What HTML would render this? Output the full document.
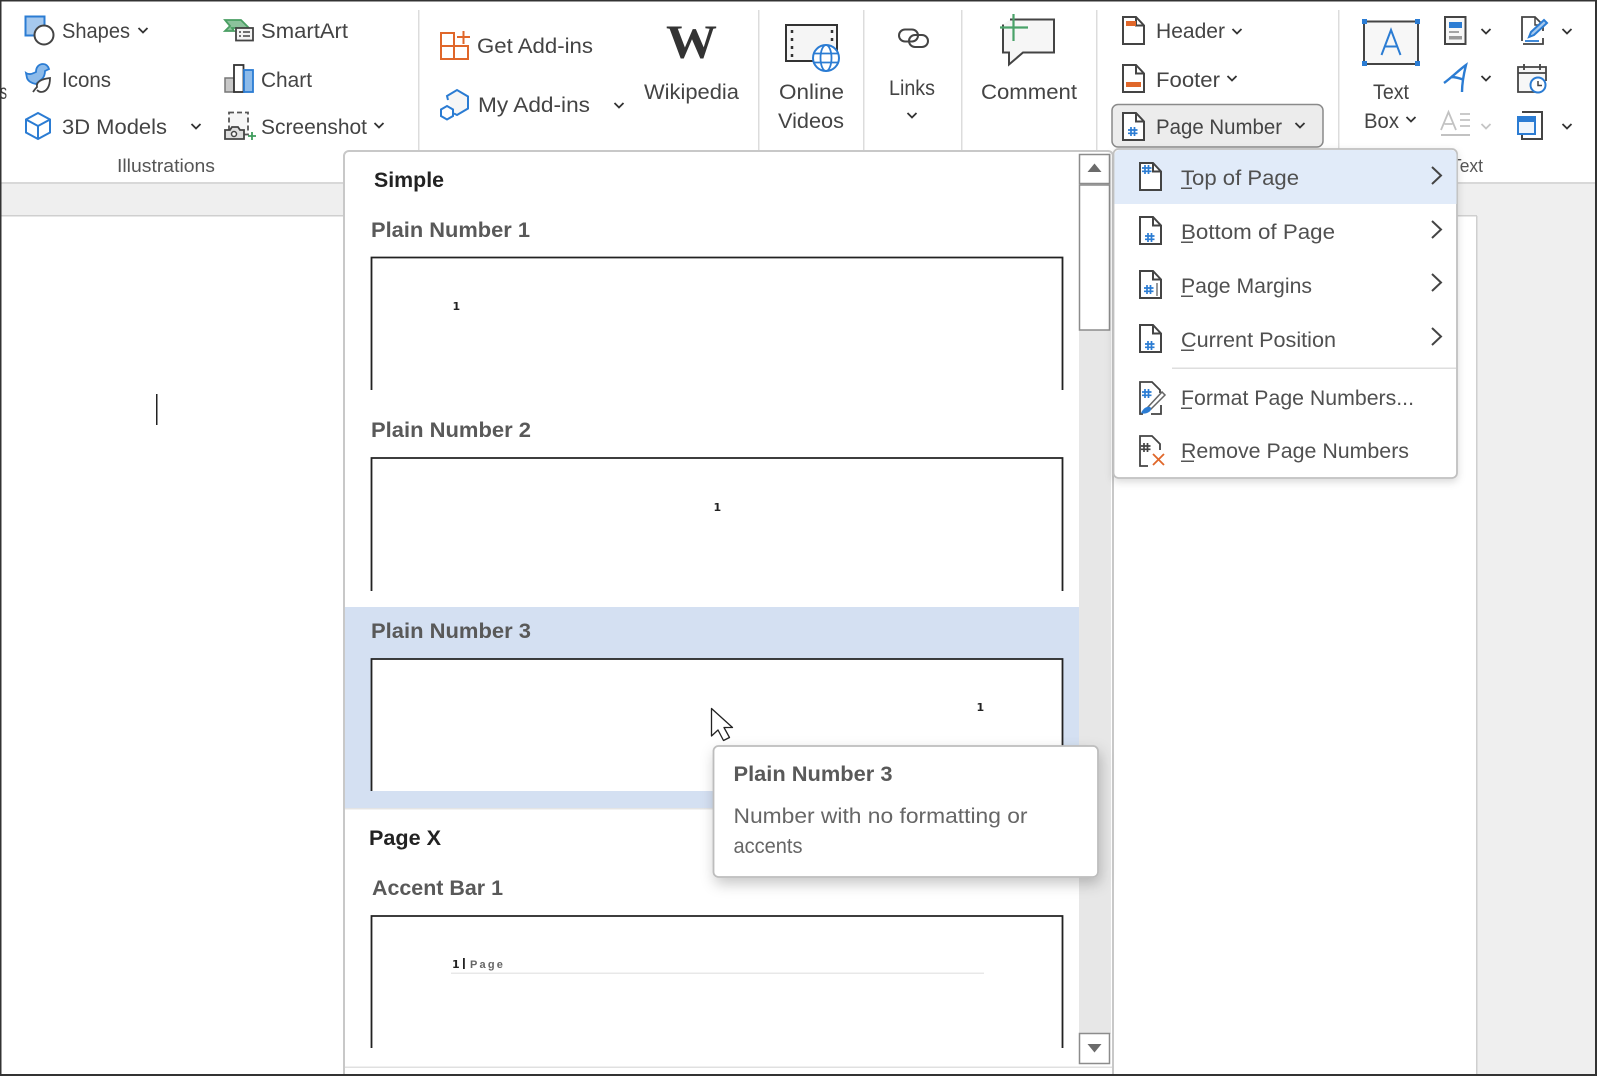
<!DOCTYPE html>
<html><head><meta charset="utf-8"><style>
html,body{margin:0;padding:0;background:#fff;width:1597px;height:1076px;overflow:hidden}
svg{display:block;position:absolute;left:0;top:0}
text{font-family:"Liberation Sans",sans-serif;font-size:21px;fill:#444}
.b{font-weight:bold;fill:#595959}
.h{font-weight:bold;fill:#222}
.g{font-size:18px;fill:#555}
.m{fill:#505050}
.t{fill:#666}
.n{font-size:11px;font-weight:bold;fill:#222;font-family:"DejaVu Sans",sans-serif}
</style></head><body>
<svg width="1597" height="1076" viewBox="0 0 1597 1076" xmlns="http://www.w3.org/2000/svg">
<defs>
<g id="c"><polyline points="-4.5,-2 0,2.5 4.5,-2" fill="none" stroke="#333" stroke-width="1.8"/></g>
<g id="r"><polyline points="0,0 9,8.5 0,17" fill="none" stroke="#444" stroke-width="2"/></g>
<g id="p"><path d="M1 1h13l8 8.5V28H1z" fill="#fff" stroke="#444" stroke-width="2"/><path d="M14 1v8.5h8" fill="none" stroke="#444" stroke-width="2"/></g>
<path id="h" d="M3 0v9M6.500 0v9M0 3h9.500M0 6.300h9.500" fill="none" stroke-width="1.700"/>
<filter id="s" x="-10%" y="-10%" width="125%" height="130%"><feDropShadow dx="2" dy="6" stdDeviation="7" flood-color="#000" flood-opacity=".22"/></filter>
<filter id="s2" x="-5%" y="-5%" width="110%" height="110%"><feDropShadow dx="0" dy="3" stdDeviation="4" flood-color="#000" flood-opacity=".15"/></filter>
</defs>

<!-- backgrounds -->
<rect width="1597" height="1076" fill="#fff"/>
<rect x="0" y="183" width="1597" height="33" fill="#efefef"/>
<rect x="0" y="182" width="1597" height="2" fill="#d8d8d8"/>
<rect x="0" y="215" width="1477" height="1.5" fill="#cfcfcf"/>
<rect x="1477" y="184" width="120" height="892" fill="#efefef"/>
<rect x="1476" y="216" width="1.5" height="860" fill="#cfcfcf"/>
<rect x="156" y="394" width="1.5" height="31" fill="#222"/>

<!-- dividers -->
<g fill="#dcdcdc"><rect x="418" y="10" width="1.5" height="140"/><rect x="758" y="10" width="1.5" height="140"/><rect x="863" y="10" width="1.5" height="140"/><rect x="961" y="10" width="1.5" height="140"/><rect x="1096" y="10" width="1.5" height="140"/><rect x="1338" y="10" width="1.5" height="140"/></g>

<!-- ribbon text -->
<text x="0" y="99" textLength="7" lengthAdjust="spacingAndGlyphs">s</text>
<text x="62" y="38" textLength="68" lengthAdjust="spacingAndGlyphs">Shapes</text>
<text x="62" y="87" textLength="49" lengthAdjust="spacingAndGlyphs">Icons</text>
<text x="62" y="134" textLength="105" lengthAdjust="spacingAndGlyphs">3D Models</text>
<text x="261" y="38" textLength="87" lengthAdjust="spacingAndGlyphs">SmartArt</text>
<text x="261" y="87" textLength="51" lengthAdjust="spacingAndGlyphs">Chart</text>
<text x="261" y="134" textLength="106" lengthAdjust="spacingAndGlyphs">Screenshot</text>
<text class="g" x="117" y="172" textLength="98" lengthAdjust="spacingAndGlyphs">Illustrations</text>
<text x="477" y="53" textLength="116" lengthAdjust="spacingAndGlyphs">Get Add-ins</text>
<text x="478" y="112" textLength="112" lengthAdjust="spacingAndGlyphs">My Add-ins</text>
<text x="644" y="99" textLength="95" lengthAdjust="spacingAndGlyphs">Wikipedia</text>
<text x="779" y="99" textLength="65" lengthAdjust="spacingAndGlyphs">Online</text>
<text x="778" y="128" textLength="66" lengthAdjust="spacingAndGlyphs">Videos</text>
<text x="889" y="95" textLength="46" lengthAdjust="spacingAndGlyphs">Links</text>
<text x="981" y="99" textLength="96" lengthAdjust="spacingAndGlyphs">Comment</text>
<text x="1156" y="38" textLength="69" lengthAdjust="spacingAndGlyphs">Header</text>
<text x="1156" y="87" textLength="64" lengthAdjust="spacingAndGlyphs">Footer</text>
<text x="1373" y="99" textLength="36" lengthAdjust="spacingAndGlyphs">Text</text>
<text x="1364" y="128" textLength="35" lengthAdjust="spacingAndGlyphs">Box</text>
<text class="g" x="1451" y="172" textLength="32" lengthAdjust="spacingAndGlyphs">Text</text>

<!-- chevrons -->
<use href="#c" x="143" y="30"/><use href="#c" x="196" y="126"/><use href="#c" x="379" y="125"/><use href="#c" x="619" y="105"/><use href="#c" x="912" y="115"/><use href="#c" x="1237" y="31"/><use href="#c" x="1232" y="78"/><use href="#c" x="1411" y="119"/><use href="#c" x="1486" y="31"/><use href="#c" x="1486" y="78"/><use href="#c" x="1567" y="31"/><use href="#c" x="1567" y="126"/>
<polyline points="1481.5,124 1486,128.500 1490.500,124" fill="none" stroke="#c4c4c4" stroke-width="1.8"/>

<!-- Shapes icon -->
<rect x="25.500" y="16.500" width="19" height="19" fill="#a6c9ee" stroke="#2b7cd3" stroke-width="2"/>
<circle cx="44" cy="35" r="9.500" fill="#fff" stroke="#444" stroke-width="2"/>
<!-- Icons duck + leaf -->
<path d="M36 72c0-5 3-8 7-8 3 0 5 2 6 5l-4 2c0 4-1 6-3 8l-6 5c-5-1-8-3-9-6l-1-5c3 2 6 1 10-1z" fill="#8dbbea" stroke="#2b7cd3" stroke-width="1.800"/>
<path d="M33 92c2-3 3-4 4-5-1-5 4-8 13-9 0 8-3 14-9 14-2 0-3-1-4-2" fill="#fff" stroke="#444" stroke-width="1.800"/>
<!-- 3D -->
<path d="M38 113l12 6.500v13L38 139l-12-6.500v-13zM26 119.500L38 126l12-6.500M38 126v13" fill="#fff" stroke="#2b7cd3" stroke-width="2"/>
<!-- SmartArt -->
<path d="M225 20h16l8 8h-14l-3 0 2 3h-9l5-5z" fill="#8cc29c" stroke="#4a9f63" stroke-width="1.800"/>
<rect x="236" y="28" width="17" height="12.500" fill="#f4f4f4" stroke="#444" stroke-width="1.800"/>
<path d="M239 32h2M239 36h2M243 32h7M243 36h7" stroke="#444" stroke-width="1.500"/>
<!-- Chart -->
<rect x="225" y="78" width="9" height="14" fill="#c8c8c8" stroke="#777" stroke-width="1.500"/>
<rect x="234" y="65" width="9.500" height="27" fill="#fff" stroke="#333" stroke-width="1.800"/>
<rect x="244" y="70" width="9" height="22" fill="#8dbbea" stroke="#2b7cd3" stroke-width="1.800"/>
<!-- Screenshot -->
<rect x="229" y="112.500" width="19" height="22" fill="#f6f6f6" stroke="#555" stroke-width="1.800" stroke-dasharray="5 3"/>
<path d="M225 130h5l2-3h6l2 3h4v9h-19z" fill="#ddd" stroke="#444" stroke-width="1.800"/>
<circle cx="234" cy="134" r="2.500" fill="#fff" stroke="#444" stroke-width="1.500"/>
<path d="M248 136h8M252 132v8" stroke="#3f9c5c" stroke-width="1.800"/>
<!-- Get Add-ins -->
<g fill="#fff" stroke="#e0672a" stroke-width="2"><rect x="441" y="33" width="13" height="13"/><rect x="441" y="46" width="13" height="13"/><rect x="454" y="46" width="14" height="13"/></g>
<path d="M457 37h13M463.500 31v13" stroke="#e0672a" stroke-width="2"/>
<!-- My Add-ins -->
<path d="M448 100l-1-4 10-6 11 6.500v12l-11 6.500-3-1.500" fill="#f6f6f6" stroke="#2b7cd3" stroke-width="2"/>
<path d="M447 106l6 3.500v6.500l-6 3.500-6-3.500v-6.500z" fill="#fff" stroke="#2b7cd3" stroke-width="2"/>
<!-- Wikipedia W -->
<text x="666" y="58" style="font-family:'Liberation Serif',serif;font-size:48px;font-weight:bold;fill:#333" textLength="51" lengthAdjust="spacingAndGlyphs">W</text>
<!-- Online Videos -->
<rect x="786" y="25" width="51" height="36" fill="#f5f5f5" stroke="#333" stroke-width="2"/>
<path d="M792 30v30M832 30v18" stroke="#333" stroke-width="2.500" stroke-dasharray="3 5"/>
<circle cx="826" cy="58" r="13" fill="#fff" stroke="#2b7cd3" stroke-width="2"/>
<ellipse cx="826" cy="58" rx="5.500" ry="13" fill="none" stroke="#2b7cd3" stroke-width="1.800"/>
<path d="M814 53.500h24M814 62.500h24" stroke="#2b7cd3" stroke-width="1.800"/>
<!-- Links -->
<rect x="899" y="29.500" width="19" height="12" rx="6" fill="none" stroke="#444" stroke-width="2"/>
<rect x="909" y="35" width="19" height="12" rx="6" fill="none" stroke="#444" stroke-width="2"/>
<!-- Comment -->
<path d="M1010 19.500h44v33h-31l-14 12v-12h-6v-28" fill="#f6f6f6" stroke="#444" stroke-width="2"/>
<path d="M1000 27.500h28M1013.500 14v27" stroke="#4aa269" stroke-width="2.200"/>
<!-- Header / Footer / Page Number -->
<use href="#p" x="1122" y="16"/><rect x="1126" y="21" width="10" height="5" fill="#e0672a"/>
<use href="#p" x="1122" y="64"/><rect x="1126" y="82" width="15" height="5" fill="#e0672a"/>
<rect x="1112" y="104.500" width="211" height="42.500" rx="6" fill="#ececec" stroke="#8a8a8a" stroke-width="1.500"/>
<use href="#p" x="1122" y="112"/>
<use href="#h" x="1128" y="127" stroke="#2b7cd3"/>
<text x="1156" y="134" textLength="126" lengthAdjust="spacingAndGlyphs">Page Number</text>
<use href="#c" x="1300" y="125"/>
<!-- Text Box -->
<rect x="1364" y="21.500" width="54" height="42.500" fill="#f7f7f7" stroke="#444" stroke-width="2"/>
<g fill="#2b7cd3"><rect x="1362" y="19" width="5" height="5"/><rect x="1415" y="19" width="5" height="5"/><rect x="1362" y="61" width="5" height="5"/><rect x="1415" y="61" width="5" height="5"/></g>
<path d="M1381.500 55l9.500-25 9.500 25M1385 46.500h12" fill="none" stroke="#2b7cd3" stroke-width="2"/>
<!-- Quick parts -->
<rect x="1445" y="17" width="20.500" height="27" fill="#f7f7f7" stroke="#444" stroke-width="2"/>
<rect x="1449" y="22" width="13" height="6" fill="#2b7cd3"/><path d="M1449 32h10" stroke="#888" stroke-width="1.500"/><rect x="1449" y="36" width="13" height="3.500" fill="#999"/>
<!-- WordArt -->
<path d="M1444 83c7-5 15-13 22-18-2 8-4 18-4 27M1451 77c4 0 8 1 12 2.500" fill="none" stroke="#2b7cd3" stroke-width="2.400"/>
<!-- Drop cap -->
<path d="M1441 130l7.500-18 7.500 18M1444.500 124h8M1460 114h10M1460 120h10M1460 126h10" fill="none" stroke="#c2c2c2" stroke-width="1.800"/>
<rect x="1441" y="134" width="29" height="2" fill="#c2c2c2"/>
<!-- Signature -->
<path d="M1522 41V17h13l8 8v6M1543 38v6h-20" fill="none" stroke="#444" stroke-width="1.800"/>
<path d="M1535 17v8h7" fill="none" stroke="#444" stroke-width="1.500"/>
<path d="M1529 37l2-5 13-12 3 3-13 12z" fill="#a6c9ee" stroke="#2b7cd3" stroke-width="2"/>
<path d="M1525 41h14" stroke="#2b7cd3" stroke-width="1.800"/>
<!-- Date -->
<path d="M1535 92h-17V67h28v14" fill="#f7f7f7" stroke="#444" stroke-width="1.800"/>
<path d="M1518 73h28M1524 64v6M1540 64v6" fill="none" stroke="#444" stroke-width="1.800"/>
<circle cx="1538" cy="85" r="7.500" fill="#fff" stroke="#2b7cd3" stroke-width="2"/>
<path d="M1538 81v4.500h4" fill="none" stroke="#444" stroke-width="1.500"/>
<!-- Object -->
<path d="M1522 112h20v27h-20v-4" fill="none" stroke="#444" stroke-width="2"/>
<rect x="1518" y="117" width="17" height="17" fill="#eef5fc" stroke="#2b7cd3" stroke-width="2"/><rect x="1518" y="117" width="17" height="5" fill="#2b7cd3"/>

<!-- gallery -->
<rect x="344" y="151" width="769" height="940" rx="5" fill="#fff" stroke="#c8c8c8" stroke-width="2"/>
<rect x="1079" y="154" width="32" height="880" fill="#e7e7e7"/>
<rect x="1079.500" y="154.500" width="30" height="29" fill="#fff" stroke="#8c8c8c" stroke-width="1.500"/>
<path d="M1087.500 172l7-8.500 7 8.500z" fill="#6b6b6b"/>
<rect x="1079.500" y="185" width="30" height="145" fill="#fff" stroke="#8c8c8c" stroke-width="1.500"/>
<rect x="1079.500" y="1033.500" width="30" height="30" fill="#fff" stroke="#8c8c8c" stroke-width="1.500"/>
<path d="M1087.500 1044l7 8.500 7-8.500z" fill="#6b6b6b"/>
<rect x="345" y="1066.500" width="767" height="1.500" fill="#e0e0e0"/>
<rect x="345" y="607" width="734" height="201" fill="#d4e0f2"/>
<rect x="345" y="808" width="734" height="1.500" fill="#e4e4e4"/>

<text class="h" x="374" y="187" textLength="70" lengthAdjust="spacingAndGlyphs">Simple</text>
<text class="b" x="371" y="237" textLength="159" lengthAdjust="spacingAndGlyphs">Plain Number 1</text>
<text class="b" x="371" y="437" textLength="160" lengthAdjust="spacingAndGlyphs">Plain Number 2</text>
<text class="b" x="371" y="638" textLength="160" lengthAdjust="spacingAndGlyphs">Plain Number 3</text>
<text class="h" x="369" y="845" textLength="72" lengthAdjust="spacingAndGlyphs">Page X</text>
<text class="b" x="372" y="895" textLength="131" lengthAdjust="spacingAndGlyphs">Accent Bar 1</text>

<g fill="#fff" stroke="#222" stroke-width="1.800">
<path d="M371.500 390V257.500H1062.500V390"/>
<path d="M371.500 591V458H1062.500V591"/>
<path d="M371.500 791V659H1062.500V791"/>
<path d="M371.500 1048V916H1062.500V1048"/>
</g>
<text class="n" x="452.500" y="310">1</text>
<text class="n" x="713.500" y="511">1</text>
<text class="n" x="976.500" y="711">1</text>
<text class="n" x="452" y="968">1</text>
<rect x="463" y="958" width="1.800" height="11" fill="#222"/>
<text x="470" y="968" style="font-size:11px;font-weight:bold;fill:#666;letter-spacing:2.200px">Page</text>
<rect x="451" y="972.500" width="533" height="1.500" fill="#e8e8e8"/>

<!-- cursor -->
<path d="M711.500 708.500v27.500l6.500-6 5.500 10.500 6-3-5.500-10h8.500z" fill="#fff" stroke="#222" stroke-width="1.300" stroke-linejoin="round"/>

<!-- tooltip -->
<rect x="713.500" y="746" width="384.500" height="131" rx="5" fill="#fff" stroke="#bdbdbd" stroke-width="1.800" filter="url(#s)"/>
<text class="b" x="733.500" y="781" textLength="159" lengthAdjust="spacingAndGlyphs">Plain Number 3</text>
<text class="t" x="733.500" y="823" textLength="294" lengthAdjust="spacingAndGlyphs">Number with no formatting or</text>
<text class="t" x="733.500" y="853" textLength="69" lengthAdjust="spacingAndGlyphs">accents</text>

<!-- page number menu -->
<rect x="1113.500" y="149" width="343.500" height="329" rx="5" fill="#fff" stroke="#c0c0c0" stroke-width="1.800" filter="url(#s2)"/>
<path d="M1114.500 204v-49a5 5 0 0 1 5-5h332a5 5 0 0 1 5 5v49z" fill="#e1ebf9"/>
<rect x="1172" y="367.500" width="284" height="1.500" fill="#dedede"/>
<text class="m" x="1181" y="185" textLength="118" lengthAdjust="spacingAndGlyphs">Top of Page</text>
<text class="m" x="1181" y="239" textLength="154" lengthAdjust="spacingAndGlyphs">Bottom of Page</text>
<text class="m" x="1181" y="293" textLength="131" lengthAdjust="spacingAndGlyphs">Page Margins</text>
<text class="m" x="1181" y="347" textLength="155" lengthAdjust="spacingAndGlyphs">Current Position</text>
<text class="m" x="1181" y="405" textLength="233" lengthAdjust="spacingAndGlyphs">Format Page Numbers...</text>
<text class="m" x="1181" y="458" textLength="228" lengthAdjust="spacingAndGlyphs">Remove Page Numbers</text>
<g fill="#555"><rect x="1181" y="187.500" width="11" height="1.500"/><rect x="1181" y="241.500" width="12" height="1.500"/><rect x="1181" y="295.500" width="12" height="1.500"/><rect x="1181" y="349.500" width="13" height="1.500"/><rect x="1181" y="407.500" width="11" height="1.500"/><rect x="1181" y="460.500" width="13" height="1.500"/></g>
<use href="#r" x="1432" y="167"/><use href="#r" x="1432" y="221"/><use href="#r" x="1432" y="274"/><use href="#r" x="1432" y="328"/>
<use href="#p" x="1139" y="162"/><use href="#h" x="1142" y="165" stroke="#2b7cd3"/>
<use href="#p" x="1139" y="216"/><use href="#h" x="1145" y="233" stroke="#2b7cd3"/>
<use href="#p" x="1139" y="270"/><use href="#h" x="1144" y="285" stroke="#2b7cd3"/><path d="M1157 283v13" stroke="#777" stroke-width="1.500"/>
<use href="#p" x="1139" y="324"/><use href="#h" x="1145" y="341" stroke="#2b7cd3"/>
<path d="M1140 408v-26h12l8 8v3M1161 405v9h-10M1140 408v6h3" fill="none" stroke="#444" stroke-width="1.800"/>
<use href="#h" x="1142" y="389" stroke="#2b7cd3"/>
<path d="M1148 407l14-15 3 3-14 14z" fill="#fff" stroke="#666" stroke-width="1.500"/><path d="M1141 413c2-4 5-7 9-6 2 1 1 4-1 5-3 2-6 2-8 1z" fill="#2b7cd3"/>
<path d="M1140 463v-27h12l8 8v6M1140 463v3h8" fill="none" stroke="#444" stroke-width="1.800"/>
<use href="#h" x="1141" y="443" stroke="#444"/>
<path d="M1153 454l11 11M1164 454l-11 11" stroke="#e0672a" stroke-width="1.800"/>

<!-- window frame -->
<rect x="0" y="0" width="1597" height="1.500" fill="#333"/>
<rect x="0" y="0" width="1.500" height="1076" fill="#333"/>
<rect x="1595" y="0" width="2" height="1076" fill="#333"/>
<rect x="0" y="1074" width="1597" height="2" fill="#333"/>
</svg>
</body></html>
